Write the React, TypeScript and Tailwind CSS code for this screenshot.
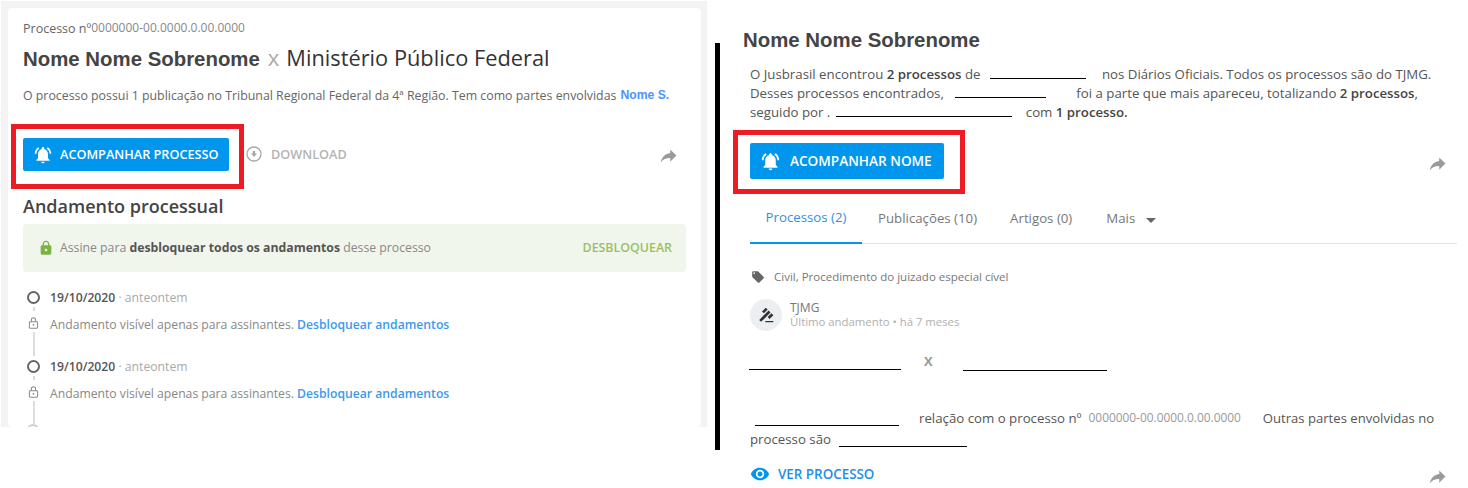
import { MdGavel, MdLocalOffer, MdLock, MdNotificationsActive, MdVisibility } from 'react-icons/md';

function ShareIcon() {
  return (
    <svg viewBox="0 0 24 24" className="w-[21px] h-[21px] text-[#9a9a9a]" fill="currentColor">
      <path d="M14 9V5l7 7-7 7v-4.1c-5 0-8.5 1.6-11 5.1 1-5 4-10 11-11z" />
    </svg>
  );
}

function DownloadIcon() {
  return (
    <svg viewBox="0 0 16 16" className="w-4 h-4 text-[#a8a8a8]" fill="none" stroke="currentColor">
      <circle cx="8" cy="8" r="7" strokeWidth="1.3" />
      <path d="M5 7.5h6L8 11z M6.8 5h2.4v3H6.8z" fill="currentColor" stroke="none" />
    </svg>
  );
}

function SmallLock() {
  return (
    <svg viewBox="0 0 12 14" className="w-[11px] h-3 text-[#8d8794]" fill="none" stroke="currentColor" strokeWidth="1.2">
      <path d="M3.5 5.5V3.5a2.5 2.5 0 0 1 5 0v2" />
      <rect x="1.2" y="5.5" width="9.6" height="7.5" rx="1" />
      <circle cx="6" cy="9.2" r="1" fill="currentColor" stroke="none" />
    </svg>
  );
}

function Blank({ width }: { width: string }) {
  return <span className={`inline-block border-b border-black h-[13px] align-baseline ${width}`} />;
}

function TimelineItem() {
  return (
    <div className="relative h-[69px] pl-[27px]">
      <div className="absolute left-[4px] top-0 flex w-[13px] flex-col items-center">
        <div className="mt-[5px] h-[13px] w-[13px] shrink-0 rounded-full border-2 border-[#666]" />
        <div className="mt-[3px] h-[4px] w-[2px] bg-[#ddd]" />
        <div className="mt-[6px] flex">
          <SmallLock />
        </div>
        <div className="mt-[3px] h-[24px] w-[2px] bg-[#ddd]" />
      </div>
      <div className="text-[12.2px] leading-[20px] pt-[2px] text-[#aaa]">
        <span className="font-semibold text-[#555]">19/10/2020</span> · anteontem
      </div>
      <div className="mt-[7px] text-[12.2px] leading-[20px] text-[#888]">
        Andamento visível apenas para assinantes.{' '}
        <span className="font-semibold text-[#3b99f0]">Desbloquear andamentos</span>
      </div>
    </div>
  );
}

export default function App() {
  return (
    <div className="flex h-[488px] w-[1468px] overflow-hidden bg-white font-['Open_Sans',sans-serif]">
      {/* left panel */}
      <div className="ml-px mt-px h-[426px] w-[706px] shrink-0 bg-[#f3f3f3] pl-[7px] pr-[6px] pt-[7px]">
        <div className="h-[419px] overflow-hidden rounded-sm bg-white">
          <div className="ml-[15px] pt-[12px] flex items-baseline text-[12.5px] leading-[18px] text-[#666]">
            Processo nº<span className="relative -top-[1px] text-[12px] text-[#888]">0000000-00.0000.0.00.0000</span>
          </div>
          <div className="ml-[15px] mt-[4px] flex items-baseline whitespace-nowrap leading-[30px]">
            <span className="font-['Liberation_Sans',sans-serif] text-[20.4px] font-bold text-[#444]">Nome Nome Sobrenome</span>
            <span className="ml-2 text-[22px] text-[#aaa]">x</span>
            <span className="ml-[7px] text-[21.8px] font-medium text-[#333]">Ministério Público Federal</span>
          </div>
          <div className="ml-[15px] mt-[12px] flex items-baseline whitespace-nowrap text-[12.35px] leading-[20px] text-[#666]">
            O processo possui 1 publicação no Tribunal Regional Federal da 4ª Região. Tem como partes envolvidas
            <span className="relative -top-[1px] ml-1 font-['Liberation_Sans',sans-serif] text-[12.2px] font-bold text-[#4d94ff]">Nome S.</span>
          </div>

          <div className="mt-[18px] flex items-center pr-[22px]">
            <div className="ml-[3px] border-[5px] border-[#ed1c24] pb-[13px] pl-[7px] pr-[10px] pt-[9px]">
              <button className="flex h-[33px] w-[206px] items-center gap-[7px] rounded-[2px] bg-[#0096ed] pl-[10px] text-[12.7px] font-semibold text-white">
                <MdNotificationsActive className="h-[20px] w-[20px]" />
                ACOMPANHAR PROCESSO
              </button>
            </div>
            <div className="mb-[4px] ml-[2px] flex items-center gap-[9px] text-[12.7px] font-semibold text-[#b4b4b4]">
              <DownloadIcon />
              DOWNLOAD
            </div>
            <div className="mb-[2px] ml-auto">
              <ShareIcon />
            </div>
          </div>

          <h2 className="ml-[15px] mt-[3px] text-[18px] font-semibold leading-[28px] text-[#444]">Andamento processual</h2>

          <div className="ml-[15px] mr-[15px] mt-[4px] flex h-[48px] items-center rounded-sm bg-[#f1f6ec] pl-[15px] pr-[14px] text-[12.25px] text-[#888]">
            <MdLock className="mr-[6px] h-4 w-4 text-[#7cb342]" />
            <span>
              Assine para <b className="font-bold text-[#555]">desbloquear todos os andamentos</b> desse processo
            </span>
            <span className="ml-auto text-[12.4px] font-semibold text-[#9bc063]">DESBLOQUEAR</span>
          </div>

          <div className="ml-[15px] mt-[14px]">
            <TimelineItem />
            <TimelineItem />
            <div className="ml-[4px] h-3 w-3 rounded-full border-2 border-[#ccc]" />
          </div>
        </div>
      </div>

      {/* divider */}
      <div className="ml-2 mt-[43px] h-[407px] w-[5px] shrink-0 bg-black" />

      {/* right panel */}
      <div className="ml-[13px] w-[725px] shrink-0">
        <h1 className="ml-[10px] mt-[28px] font-['Liberation_Sans',sans-serif] text-[20.4px] font-bold leading-[24px] text-[#444]">
          Nome Nome Sobrenome
        </h1>
        <div className="ml-[17px] mt-[13px] whitespace-nowrap text-[13.25px] leading-[19px] text-[#555]">
          <div>
            O Jusbrasil encontrou <b className="font-semibold text-[#444]">2 processos</b> de <Blank width="ml-[6px] w-[96px]" />
            <span className="ml-[16px]">nos Diários Oficiais. Todos os processos são do TJMG.</span>
          </div>
          <div>
            Desses processos encontrados, <Blank width="ml-[8px] w-[91px]" />
            <span className="ml-[30px]">foi a parte que mais apareceu, totalizando <b className="font-semibold text-[#444]">2 processos</b>,</span>
          </div>
          <div>
            seguido por . <Blank width="ml-[2px] w-[176px]" />
            <span className="ml-[14px]">com <b className="font-semibold text-[#444]">1 processo.</b></span>
          </div>
        </div>

        <div className="mt-[8px] flex items-center pr-[10px]">
          <div className="border-[5px] border-[#ed1c24] pb-[10px] pl-[12px] pr-[16px] pt-[8px]">
            <button className="flex h-[36px] w-[194px] items-center gap-[9px] rounded-[2px] bg-[#0096ed] pl-[10px] text-[13.6px] font-semibold text-white">
              <MdNotificationsActive className="h-[21px] w-[21px]" />
              ACOMPANHAR NOME
            </button>
          </div>
          <div className="ml-auto mt-[3px]">
            <ShareIcon />
          </div>
        </div>

        <div className="ml-[17px] mr-px mt-[5px] flex h-[45px] items-stretch border-b border-[#e2e2e2] text-[13.25px] text-[#777]">
          <div className="-mb-px flex w-[112px] items-center justify-center border-b-2 border-[#0096ed] pb-[5px] text-[#2a92e8]">Processos (2)</div>
          <div className="ml-[16px] flex items-center pb-[5px]">Publicações (10)</div>
          <div className="ml-[33px] flex items-center pb-[5px]">Artigos (0)</div>
          <div className="ml-[34px] flex items-center pb-[5px]">
            Mais
            <span className="ml-[11px] mt-[4px] border-x-[5px] border-t-[5px] border-x-transparent border-t-[#666]" />
          </div>
        </div>

        <div className="ml-[18px] mt-[24px] flex items-center gap-[9px] text-[11.5px] leading-[18px] text-[#777]">
          <MdLocalOffer className="h-[14px] w-[14px] text-[#666]" />
          Civil, Procedimento do juizado especial cível
        </div>

        <div className="ml-[17px] mt-[13px] flex items-center gap-2">
          <div className="flex h-8 w-8 items-center justify-center rounded-full bg-[#eceff2]">
            <MdGavel className="h-4 w-4 -scale-x-100 text-[#333]" />
          </div>
          <div className="text-[11.35px] leading-[14px] text-[#b0b0b0]">
            <div className="text-[12px] text-[#777]">TJMG</div>
            Último andamento • há 7 meses
          </div>
        </div>

        <div className="ml-[16px] mt-[15px] flex h-[24px] items-end">
          <div className="w-[152px] border-b border-black" />
          <span className="mb-[-1px] ml-[23px] text-[13px] font-bold leading-[20px] text-[#999]">X</span>
          <div className="mb-[-1px] ml-[30px] w-[144px] border-b border-black" />
        </div>

        <div className="ml-[17px] mt-[38px] text-[13.25px] leading-[21px] text-[#555] whitespace-nowrap">
          <div>
            <Blank width="ml-[5px] w-[144px] translate-y-[3px]" />
            <span className="ml-[20px]">relação com o processo nº</span>
            <span className="ml-[7px] relative -top-[1px] text-[11.9px] text-[#999]">0000000-00.0000.0.00.0000</span>
            <span className="ml-[22px] text-[13.1px]">Outras partes envolvidas no</span>
          </div>
          <div>
            processo são <Blank width="ml-[5px] w-[128px] translate-y-[3px]" />
          </div>
        </div>

        <div className="ml-[17px] mr-[10px] mt-[11px] flex items-center justify-between">
          <div className="flex items-center gap-[8px] text-[13.4px] font-semibold text-[#1e90e8]">
            <MdVisibility className="h-[20px] w-[20px] text-[#0096ed]" />
            VER PROCESSO
          </div>
          <div className="pt-[5px]">
            <ShareIcon />
          </div>
        </div>
      </div>
    </div>
  );
}
